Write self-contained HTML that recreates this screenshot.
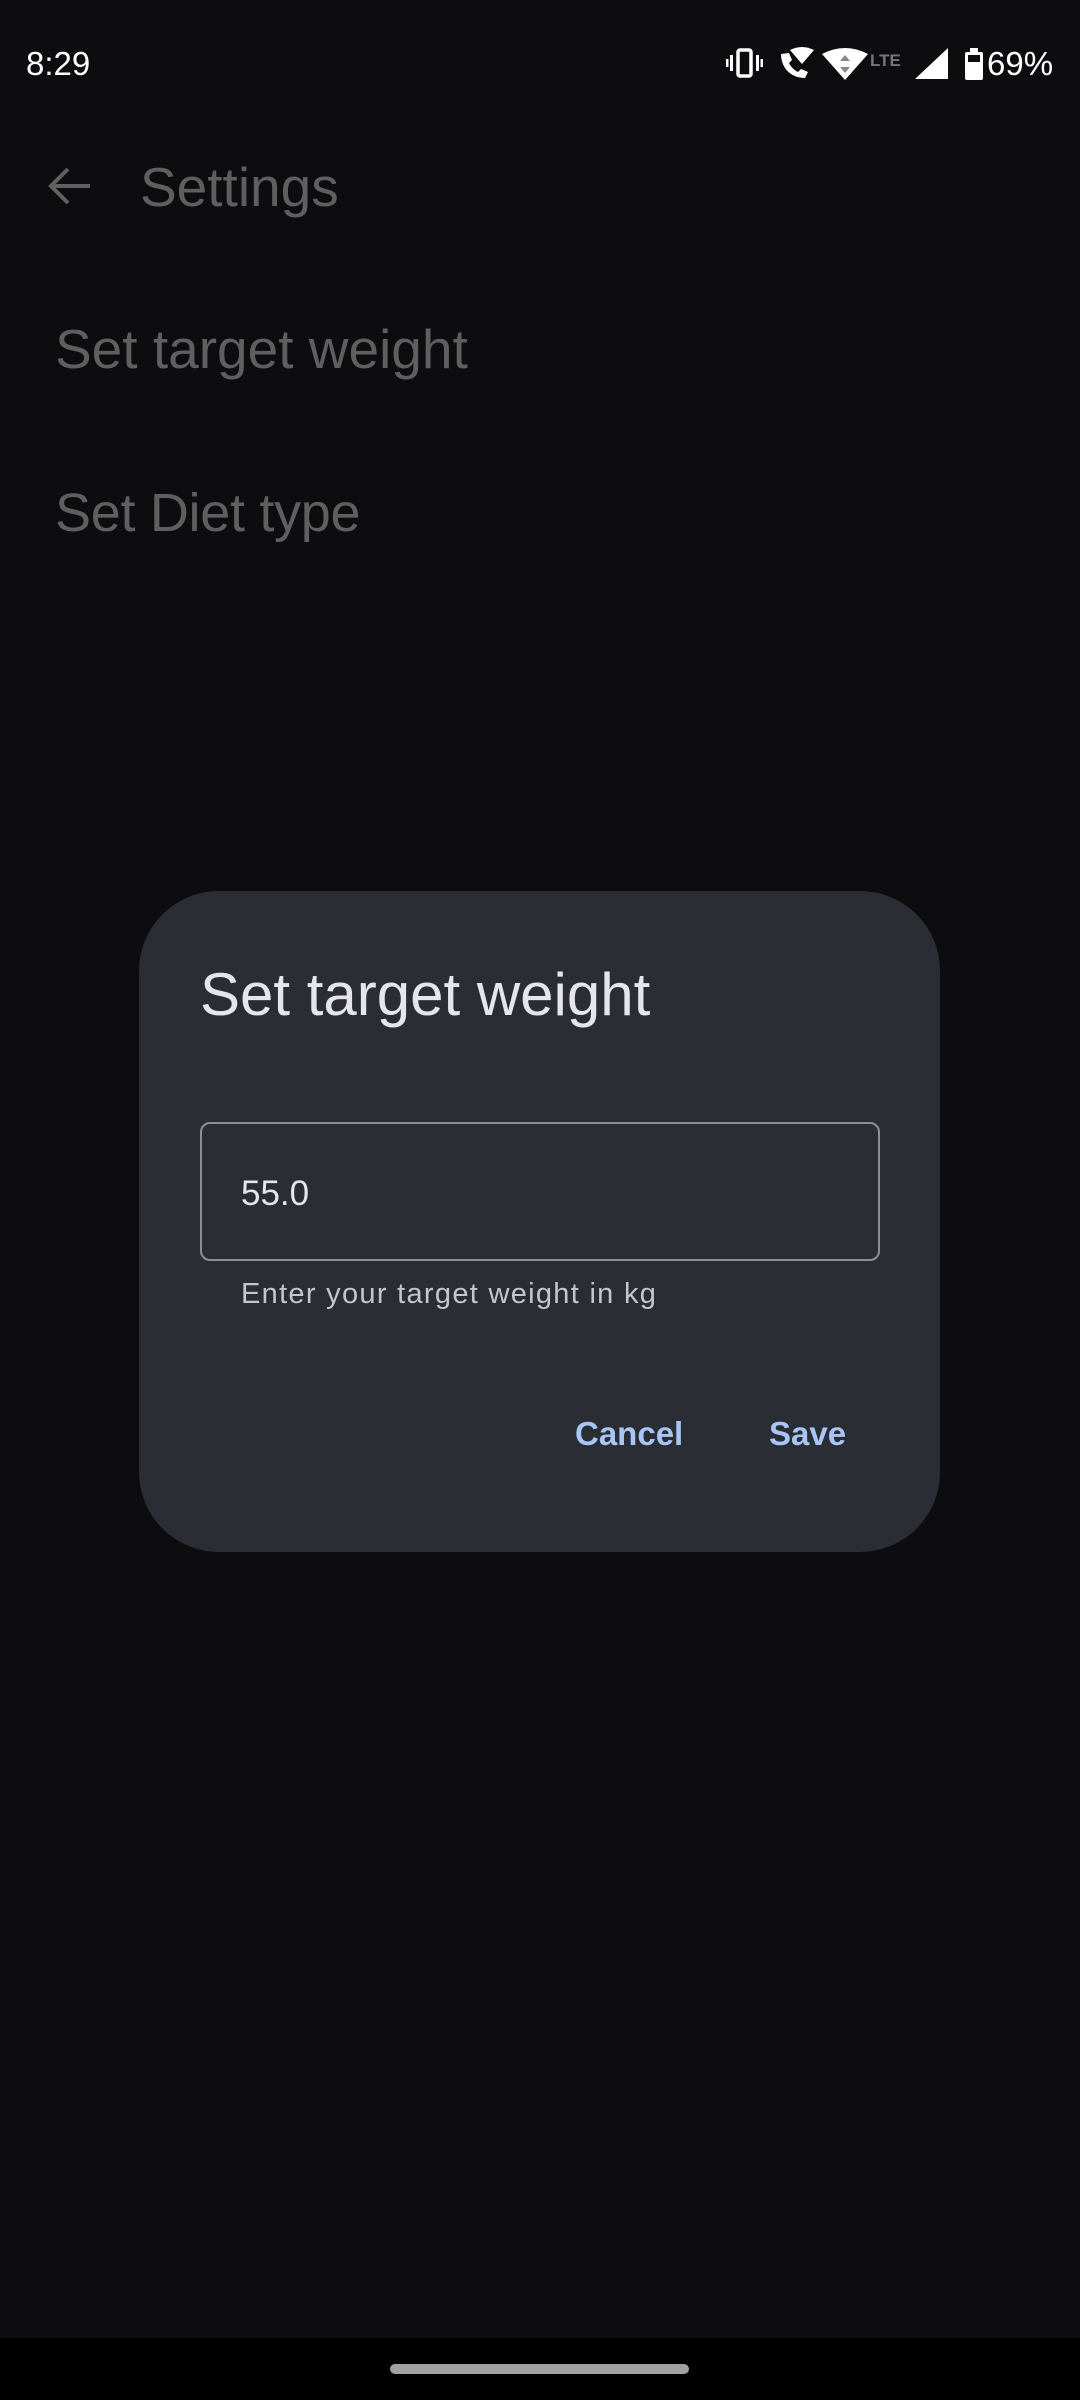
<!DOCTYPE html>
<html><head><meta charset="utf-8"><style>
*{margin:0;padding:0;box-sizing:border-box}
body{width:1080px;height:2400px;background:#0d0d10;position:relative;overflow:hidden;font-family:"Liberation Sans",sans-serif}
.a{position:absolute;white-space:nowrap}
</style></head><body>
<div class="a" style="left:26px;top:44px;font-size:33px;color:#fff;line-height:40px">8:29</div>
<svg class="a" style="left:726px;top:44px" width="330" height="42" viewBox="0 0 330 42">
 <g fill="#fff">
  <rect x="12" y="6" width="13" height="26" rx="2" fill="none" stroke="#fff" stroke-width="3.5"/>
  <rect x="4" y="11" width="3" height="16"/><rect x="30" y="11" width="3" height="16"/>
  <rect x="0" y="15" width="2.5" height="8"/><rect x="34.5" y="15" width="2.5" height="8"/>
  <path d="M55 10c0 14 10 24 24 24l3-6-7-3-3 3c-4-2-7-5-9-9l3-3-3-7z"/>
  <path d="M64 6q12-6 24 0l-12 14z"/>
  <path d="M96 10q23-12 46 0l-23 26z"/>
 </g>
 <path d="M119 11l-5 6h10zM119 29l-5-6h10z" fill="#888"/>
 <text x="144" y="22" font-size="17" font-weight="bold" fill="#777" font-family="Liberation Sans">LTE</text>
 <path d="M189 35L222 4V35Z" fill="#fff"/>
 <rect x="239" y="8" width="18" height="28" rx="2" fill="#fff"/><rect x="244" y="4" width="8" height="5" fill="#fff"/>
 <rect x="242" y="11" width="12" height="7" fill="#0d0d10"/>
</svg>
<div class="a" style="left:987px;top:44px;font-size:33px;color:#fff;line-height:40px">69%</div>
<svg class="a" style="left:46px;top:165px" width="48" height="42" viewBox="0 0 48 42"><path d="M44 21H6M22 4L5 21l17 17" stroke="#606060" stroke-width="4" fill="none"/></svg>
<div class="a" style="left:140px;top:155px;font-size:55px;color:#5f5f60;line-height:64px">Settings</div>
<div class="a" style="left:55px;top:317px;font-size:55px;color:#5f5f60;line-height:64px">Set target weight</div>
<div class="a" style="left:55px;top:481px;font-size:54px;color:#5f5f60;line-height:64px;letter-spacing:-0.3px">Set Diet type</div>
<div class="a" style="left:139px;top:891px;width:801px;height:661px;background:#2b2d35;border-radius:80px"></div>
<div class="a" style="left:200px;top:960px;font-size:60px;color:#e6e6ea;line-height:70px">Set target weight</div>
<div class="a" style="left:200px;top:1122px;width:680px;height:139px;border:2.5px solid #8d8f97;border-radius:10px"></div>
<div class="a" style="left:241px;top:1173px;font-size:35px;color:#e6e6ea;line-height:42px">55.0</div>
<div class="a" style="left:241px;top:1277px;font-size:29px;color:#c4c6cd;line-height:34px;letter-spacing:1.3px">Enter your target weight in kg</div>
<div class="a" style="left:575px;top:1414px;font-size:33px;font-weight:bold;color:#a9c5f5;line-height:40px">Cancel</div>
<div class="a" style="left:769px;top:1414px;font-size:33px;font-weight:bold;color:#a9c5f5;line-height:40px">Save</div>
<div class="a" style="left:0;top:2338px;width:1080px;height:62px;background:#000"></div>
<div class="a" style="left:390px;top:2364px;width:299px;height:10px;border-radius:5px;background:#a0a0a0"></div>
</body></html>
